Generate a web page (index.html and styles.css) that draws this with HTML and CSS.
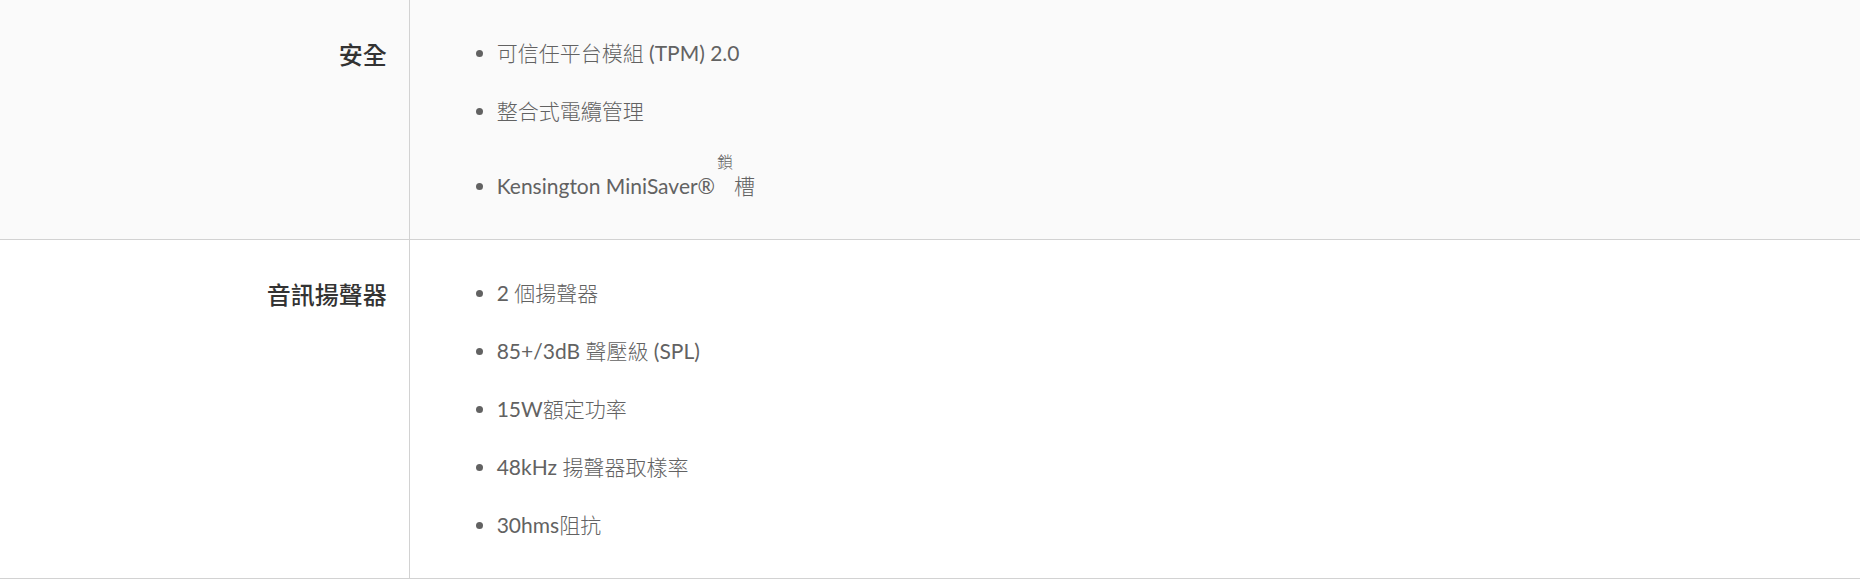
FILE: index.html
```html
<!DOCTYPE html>
<html lang="zh-Hant">
<head>
<meta charset="utf-8">
<title>規格</title>
<link rel="stylesheet" href="styles.css">
</head>
<body>
<table class="specs">
  <tbody>
    <tr class="row row-alt">
      <th class="label">安全</th>
      <td class="value">
        <ul class="list">
          <li>可信任平台模組 (TPM) 2.0</li>
          <li>整合式電纜管理</li>
          <li>Kensington MiniSaver®<sup class="sup">鎖</sup>槽</li>
        </ul>
      </td>
    </tr>
    <tr class="row">
      <th class="label">音訊揚聲器</th>
      <td class="value">
        <ul class="list">
          <li>2 個揚聲器</li>
          <li>85+/3dB 聲壓級 (SPL)</li>
          <li>15W額定功率</li>
          <li>48kHz 揚聲器取樣率</li>
          <li>30hms阻抗</li>
        </ul>
      </td>
    </tr>
  </tbody>
</table>
</body>
</html>
```

FILE: styles.css
```css
html, body {
  margin: 0;
  padding: 0;
  background: #ffffff;
}

body {
  font-family: Lato, "Noto Sans CJK TC", sans-serif;
  color: #626262;
}

.specs {
  width: 100%;
  border-collapse: collapse;
  border-spacing: 0;
}

.row {
  border-bottom: 1px solid #d2d2d2;
  background: #ffffff;
}

.row-alt {
  background: #fafafa;
}

.label {
  width: 22%;
  box-sizing: border-box;
  border-right: 1px solid #d2d2d2;
  padding: 40px 22px 0 0;
  text-align: right;
  vertical-align: top;
  font-family: Lato, "Noto Sans CJK TC", sans-serif;
  font-size: 24px;
  font-weight: 500;
  line-height: 30px;
  color: #333333;
}

.value {
  padding: 38px 0;
  vertical-align: top;
}

.list {
  margin: 0;
  padding: 0 0 0 87px;
  list-style: disc;
  font-family: Lato, "Noto Sans CJK TC Light", "Noto Sans CJK TC", sans-serif;
  font-size: 21px;
  font-weight: 400;
  line-height: 30px;
}

.list li + li {
  margin-top: 28px;
}

.sup {
  font-size: 16px;
  line-height: 16px;
  vertical-align: 26px;
  margin: 0 1px 0 2px;
}
```
